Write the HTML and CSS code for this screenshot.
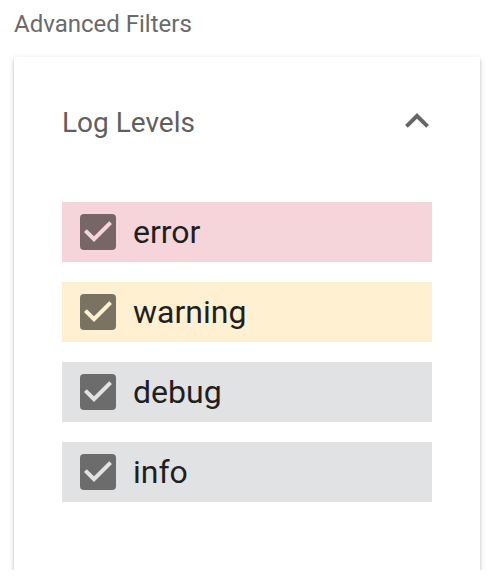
FILE: index.html
```html
<!DOCTYPE html>
<html lang="en">
<head>
<meta charset="utf-8">
<title>Advanced Filters</title>
<link rel="stylesheet" href="styles.css">
</head>
<body>
<div class="page">
  <h2 class="page-title">Advanced Filters</h2>
  <section class="card">
    <div class="card-header">
      <span class="card-title">Log Levels</span>
      <svg class="expand-icon" viewBox="0 0 24 24" width="48" height="48" aria-hidden="true">
        <path d="M12 8l-6 6 1.41 1.41L12 10.83l4.59 4.58L18 14z" fill="#666666"/>
      </svg>
    </div>
    <ul class="levels">
      <li class="level level-error">
        <svg class="check" viewBox="3 3 18 18" width="36" height="36" aria-hidden="true">
          <rect x="3" y="3" width="18" height="18" rx="2" class="check-box"/>
          <path d="M10 17l-5-5 1.41-1.41L10 14.17l7.59-7.59L19 8l-9 9z" class="check-mark"/>
        </svg>
        <span class="level-label">error</span>
      </li>
      <li class="level level-warning">
        <svg class="check" viewBox="3 3 18 18" width="36" height="36" aria-hidden="true">
          <rect x="3" y="3" width="18" height="18" rx="2" class="check-box"/>
          <path d="M10 17l-5-5 1.41-1.41L10 14.17l7.59-7.59L19 8l-9 9z" class="check-mark"/>
        </svg>
        <span class="level-label">warning</span>
      </li>
      <li class="level level-debug">
        <svg class="check" viewBox="3 3 18 18" width="36" height="36" aria-hidden="true">
          <rect x="3" y="3" width="18" height="18" rx="2" class="check-box"/>
          <path d="M10 17l-5-5 1.41-1.41L10 14.17l7.59-7.59L19 8l-9 9z" class="check-mark"/>
        </svg>
        <span class="level-label">debug</span>
      </li>
      <li class="level level-info">
        <svg class="check" viewBox="3 3 18 18" width="36" height="36" aria-hidden="true">
          <rect x="3" y="3" width="18" height="18" rx="2" class="check-box"/>
          <path d="M10 17l-5-5 1.41-1.41L10 14.17l7.59-7.59L19 8l-9 9z" class="check-mark"/>
        </svg>
        <span class="level-label">info</span>
      </li>
    </ul>
  </section>
</div>
</body>
</html>
```

FILE: styles.css
```css
* {
  box-sizing: border-box;
}

html, body {
  margin: 0;
  padding: 0;
  background: #ffffff;
}

body {
  font-family: Roboto, "Liberation Sans", Arial, sans-serif;
}

.page {
  padding: 8px 18px 0 14px;
}

.page-title {
  margin: 0 0 17px 0;
  font-size: 24px;
  line-height: 32px;
  font-weight: 400;
  color: #6a6a6a;
}

.card {
  width: 466px;
  background: #ffffff;
  padding: 40px 48px 68px 48px;
  box-shadow: 0 2px 6px rgba(0, 0, 0, 0.18), 0 2px 2px rgba(0, 0, 0, 0.12), 0 4px 2px -2px rgba(0, 0, 0, 0.12);
}

.card-header {
  display: flex;
  align-items: center;
  justify-content: space-between;
  height: 48px;
  margin-bottom: 57px;
}

.card-title {
  font-size: 28px;
  line-height: 40px;
  color: #5f5f5f;
  margin-top: 3px;
}

.expand-icon {
  display: block;
  margin-right: -9px;
}

.levels {
  list-style: none;
  margin: 0;
  padding: 0;
  display: flex;
  flex-direction: column;
  gap: 20px;
}

.level {
  --row-bg: #e1e2e4;
  display: flex;
  align-items: center;
  gap: 17px;
  height: 60px;
  padding-left: 18px;
  background: var(--row-bg);
}

.level-error {
  --row-bg: #f6d5da;
}

.level-warning {
  --row-bg: #fff0d1;
}

.level-debug,
.level-info {
  --row-bg: #e1e2e4;
}

.check {
  display: block;
  flex: none;
}

.check-box {
  fill: rgba(0, 0, 0, 0.52);
}

.check-mark {
  fill: var(--row-bg);
}

.level-label {
  font-size: 32px;
  line-height: 40px;
  color: #1f1f1f;
}
```
